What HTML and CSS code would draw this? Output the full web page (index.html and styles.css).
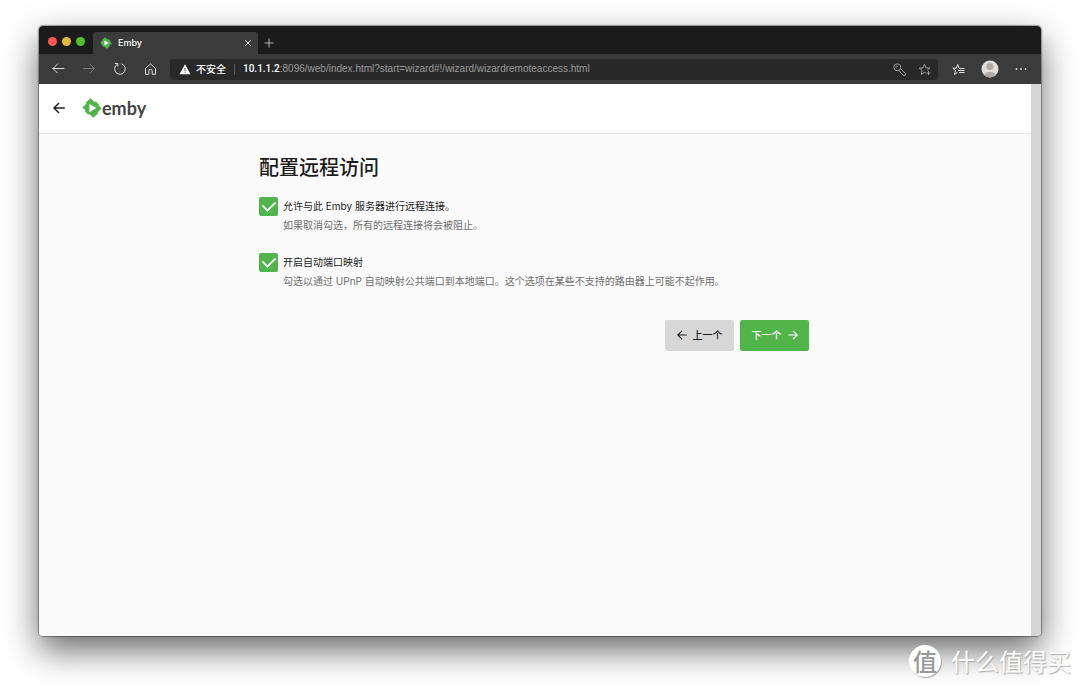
FILE: index.html
```html
<!DOCTYPE html>
<html lang="zh-CN">
<head>
<meta charset="utf-8">
<title>Emby</title>
<link rel="stylesheet" href="styles.css">
</head>
<body>
<svg class="defs" aria-hidden="true">
  <symbol id="emby-mark" viewBox="0 0 20 20">
    <path d="M8.500.3 12.600 4.100 13.700 3.200 17.200 6.700 16.500 7.600 19.700 10.500 15.400 14.500 16.100 15.500 11.200 19.700 7.200 15.900 6.200 16.800 2.800 13.300 3.600 12.400.3 9.400 4.500 5.500 3.800 4.600z" fill="#52b54b"/>
    <path d="M7.400 5.900v8.300l7-4.200z" fill="#fff"/>
  </symbol>
</svg>
<div class="window">
  <div class="tabbar">
    <div class="lights"><span class="light red"></span><span class="light yellow"></span><span class="light green"></span></div>
    <div class="tab">
      <svg class="tab-logo"><use href="#emby-mark"/></svg>
      <span class="tab-title">Emby</span>
      <button class="icon-button" aria-label="关闭标签页"><svg width="8" height="8" viewBox="0 0 8 8" stroke="#e4e4e4" fill="none"><path d="M1.200 1.200l5.600 5.600M6.800 1.200 1.200 6.800"/></svg></button>
    </div>
    <button class="icon-button new-tab" aria-label="新建标签页"><svg width="10" height="10" viewBox="0 0 10 10" stroke="#b5b5b5" fill="none"><path d="M5 .5v9M.5 5h9"/></svg></button>
  </div>
  <div class="toolbar">
    <div class="nav">
      <button class="icon-button" aria-label="后退"><svg width="14" height="14" viewBox="0 0 14 14" stroke="#dedede" fill="none" stroke-linecap="round"><path d="M2 6.500h11M6.500 2 2 6.500 6.500 11"/></svg></button>
      <button class="icon-button" aria-label="前进"><svg width="14" height="14" viewBox="0 0 14 14" stroke="#777" fill="none" stroke-linecap="round"><path d="M1.500 6.500h11M8 2 12.500 6.500 8 11"/></svg></button>
      <button class="icon-button" aria-label="刷新"><svg width="14" height="14" viewBox="0 0 14 14" stroke="#dedede" fill="none"><path d="M8.500 1.900a5.300 5.300 0 1 1-4.300.5M1.800 1.500h3v3"/></svg></button>
      <button class="icon-button" aria-label="主页"><svg width="14" height="14" viewBox="0 0 14 14" stroke="#dedede" fill="none" stroke-linejoin="round"><path d="M1.500 6.300 6.500 2l5 4.300v6H8.200V9a1.700 1.700 0 0 0-3.400 0v3.300H1.500z"/></svg></button>
    </div>
    <div class="address">
      <svg width="12" height="11" viewBox="0 0 12 11"><path d="M6 .3 11.500 10.200H.5z" fill="#fff"/><path d="M6 4v3.300M6 8.200v1" stroke="#2a2a2a" stroke-width=".8"/></svg>
      <span class="insecure">不安全</span>
      <span class="divider"></span>
      <span class="url"><b>10.1.1.2</b>:8096/web/index.html?start=wizard#!/wizard/wizardremoteaccess.html</span>
      <button class="icon-button" aria-label="密码"><svg width="13" height="13" viewBox="0 0 13 13" stroke="#999" fill="none"><circle cx="4.300" cy="4.300" r="3.500"/><circle cx="3.500" cy="3.500" r=".6"/><path d="M7.500 5.800 12.300 10.300v2H10L9.500 11 8.300 10.500 5.800 7.500"/></svg></button>
      <button class="icon-button" aria-label="收藏"><svg width="13" height="13" viewBox="0 0 13 13" stroke="#999" fill="none"><path d="M8 10.300 6.500 9.300 3.200 11.500l1-4L1 5h4l1.500-3.700L8 5h4L9.300 7.200M10.500 8v4M8.500 10h4"/></svg></button>
    </div>
    <div class="tools">
      <button class="icon-button" aria-label="收藏夹"><svg width="13" height="13" viewBox="0 0 13 13" stroke="#e4e4e4" fill="none"><path d="M5.500 9.300 2.500 11.500l1-4L.8 5.200h3.500L5.700 1.500l1.300 3.700M7 5.500h5.500M6 7.500h6.500M7 9.500h5.500"/></svg></button>
      <button class="icon-button" aria-label="用户"><svg width="18" height="18" viewBox="0 0 18 18"><clipPath id="face"><circle cx="9" cy="9" r="8.500"/></clipPath><g clip-path="url(#face)"><path d="M0 0h18v18H0z" fill="#e1dedb"/><circle cx="9" cy="6.500" r="3.600" fill="#aeaaa7"/><ellipse cx="9" cy="16" rx="6" ry="4" fill="#aeaaa7"/></g></svg></button>
      <button class="icon-button" aria-label="更多"><svg width="12" height="4" viewBox="0 0 12 4" fill="#dedede"><circle cx="1.500" cy="2" r=".9"/><circle cx="6" cy="2" r=".9"/><circle cx="10.500" cy="2" r=".9"/></svg></button>
    </div>
  </div>
  <div class="viewport">
    <div class="page">
      <header class="header">
        <button class="icon-button" aria-label="返回"><svg width="12" height="12" viewBox="0 0 12 12" stroke="#222" fill="none" stroke-width="1.500"><path d="M.8 6h11M6 1 1 6l5 5"/></svg></button>
        <div class="brand"><svg class="brand-logo"><use href="#emby-mark"/></svg><span>emby</span></div>
      </header>
      <main class="content">
        <h1>配置远程访问</h1>
        <div class="option">
          <input type="checkbox" id="remote" checked>
          <label for="remote">允许与此 Emby 服务器进行远程连接。</label>
          <p>如果取消勾选，所有的远程连接将会被阻止。</p>
        </div>
        <div class="option">
          <input type="checkbox" id="ports" checked>
          <label for="ports">开启自动端口映射</label>
          <p>勾选以通过 UPnP 自动映射公共端口到本地端口。这个选项在某些不支持的路由器上可能不起作用。</p>
        </div>
        <div class="actions">
          <button class="button"><svg width="10" height="10" viewBox="0 0 10 10" stroke="currentColor" fill="none" stroke-width="1.200"><path d="M.8 5h9M5 .8.800 5 5 9.200"/></svg>上一个</button>
          <button class="button primary">下一个<svg width="10" height="10" viewBox="0 0 10 10" stroke="currentColor" fill="none" stroke-width="1.200"><path d="M.2 5h9M5 .8 9.200 5 5 9.200"/></svg></button>
        </div>
      </main>
    </div>
    <div class="scrollbar"></div>
  </div>
</div>
<div class="watermark"><span class="seal">值</span><span>什么值得买</span></div>
</body>
</html>
```
FILE: styles.css
```css
* { box-sizing: border-box; }
body {
  margin: 0;
  height: 100vh;
  padding: 26px 39px 52px;
  overflow: hidden;
  background: #fff;
  font: 10px/16px Inter, "Noto Sans CJK SC", sans-serif;
  color: #1c1c1c;
}
button { font: inherit; color: inherit; border: 0; padding: 0; background: none; }
svg { display: block; flex: none; }
.defs { position: absolute; width: 0; height: 0; }
.icon-button { display: flex; align-items: center; justify-content: center; flex: none; }
.window {
  height: 100%;
  display: flex;
  flex-direction: column;
  border-radius: 4px;
  overflow: hidden;
  box-shadow: 0 0 1px 1px rgba(0, 0, 0, .35), 0 14px 34px rgba(0, 0, 0, .6);
}
.tabbar { display: flex; height: 28px; padding-left: 9px; background: #1b1b1b; }
.lights { display: flex; align-items: center; gap: 5px; width: 45px; padding-top: 2px; }
.light { width: 9px; height: 9px; border-radius: 50%; }
.red { background: #fc5753; }
.yellow { background: #e2b93c; }
.green { background: #53c12f; }
.tab {
  display: flex;
  align-items: center;
  width: 165px;
  margin-top: 6px;
  padding: 0 6px 0 7px;
  border-radius: 3px 3px 0 0;
  background: #3b3b3b;
  color: #fff;
  font-size: 9px;
  font-weight: 500;
}
.tab-logo { width: 12px; height: 12px; margin-right: 6px; }
.tab-title { flex: 1; }
.new-tab { width: 22px; margin-top: 6px; }
.toolbar { display: flex; align-items: center; height: 30px; background: #3b3b3b; }
.nav { display: flex; gap: 17px; width: 131px; padding-left: 12px; }
.address {
  flex: 1;
  min-width: 0;
  display: flex;
  align-items: center;
  height: 21px;
  padding: 0 7px 0 9px;
  border-radius: 3px;
  background: #292929;
  color: #fff;
}
.insecure { margin-left: 5px; font-weight: 500; }
.divider { width: 1px; height: 11px; margin: 0 8px; background: #5a5a5a; }
.url { flex: 1; color: #9a9a9a; font-family: "Liberation Sans", sans-serif; white-space: nowrap; overflow: hidden; }
.url b { color: #fff; font-family: Roboto, sans-serif; font-weight: 500; }
.address .icon-button { margin-left: 12px; }
.tools { display: flex; align-items: center; gap: 16px; padding: 0 14px; }
.viewport { flex: 1; display: flex; min-height: 0; }
.page { flex: 1; background: #fafafa; }
.scrollbar { width: 10px; background: #d5d5d5; }
.header {
  display: flex;
  align-items: center;
  gap: 17px;
  height: 50px;
  padding: 0 14px 2px;
  background: #fff;
  border-bottom: 1px solid #e8e8e8;
}
.brand { display: flex; align-items: center; font: 700 18px/24px Lato, sans-serif; color: #444; }
.brand-logo { width: 20px; height: 20px; }
.content { width: 56%; max-width: 552px; margin: 0 auto; padding: 19px 2px 0 0; }
h1 { margin: 0 0 13px; font-size: 20px; line-height: 31px; font-weight: 500; }
.option {
  display: grid;
  grid-template-columns: 19px 1fr;
  column-gap: 5px;
  row-gap: 1px;
  margin-bottom: 19px;
}
.option label { line-height: 19px; }
.option p { grid-column: 2; margin: 0; line-height: 17px; color: #6e6e6e; }
input {
  appearance: none;
  width: 19px;
  height: 19px;
  margin: 0;
  border-radius: 2px;
  background: #52b54b;
  display: grid;
  place-items: center;
}
input:checked::before {
  content: "";
  width: 12px;
  height: 7px;
  border: solid #fff;
  border-width: 0 0 2px 2px;
  transform: translateY(-2px) rotate(-45deg) scale(.9);
}
.actions { display: flex; justify-content: flex-end; gap: 6px; padding-top: 11px; }
.button {
  display: flex;
  align-items: center;
  justify-content: center;
  gap: 6px;
  width: 69px;
  height: 31px;
  padding-bottom: 1px;
  border-radius: 2px;
  background: #d7d7d7;
  font-weight: 500;
}
.primary { background: #52b54b; color: #fff; }
.watermark {
  position: absolute;
  right: 9px;
  bottom: 10px;
  display: flex;
  align-items: center;
  gap: 10px;
  color: #fff;
  font: 24px/34px "Noto Sans CJK SC", sans-serif;
  text-shadow: 1px 1px 1px #aaa, 0 0 1px #ccc;
}
.seal {
  width: 32px;
  height: 32px;
  line-height: 31px;
  border-radius: 50%;
  background: #fff;
  color: #999;
  font-weight: 500;
  text-align: center;
  text-shadow: none;
  box-shadow: 1px 1px 1px #aaa;
}
```
